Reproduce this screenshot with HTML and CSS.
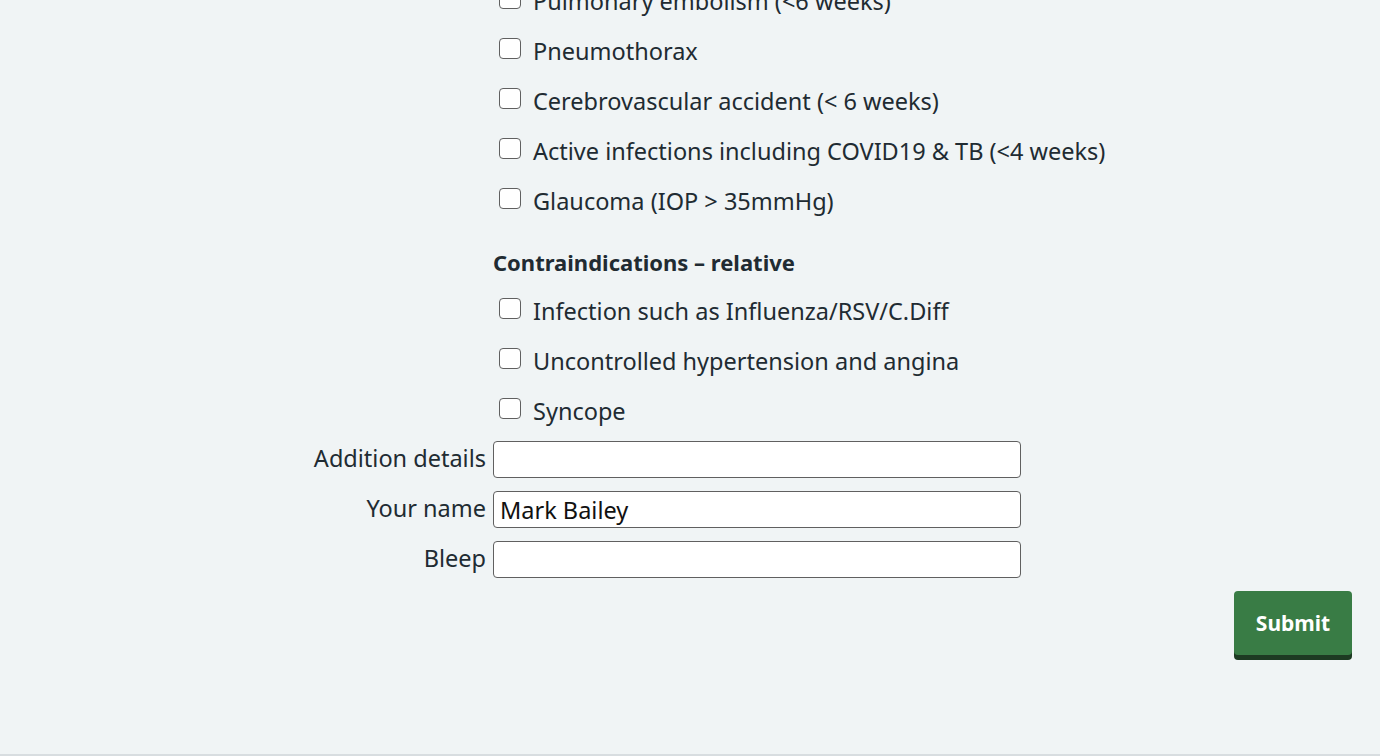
FILE: index.html
```html
<!DOCTYPE html>
<html lang="en">
<head>
<meta charset="utf-8">
<title>Referral form</title>
<link rel="stylesheet" href="styles.css">
</head>
<body>
<main class="page">
  <form class="form">
    <div class="label-col"></div>
    <div class="field-col">
      <ul class="checks">
        <li class="check"><span class="box"></span><span>Pulmonary embolism (&lt;6 weeks)</span></li>
        <li class="check"><span class="box"></span><span>Pneumothorax</span></li>
        <li class="check"><span class="box"></span><span>Cerebrovascular accident (&lt; 6 weeks)</span></li>
        <li class="check"><span class="box"></span><span>Active infections including COVID19 &amp; TB (&lt;4 weeks)</span></li>
        <li class="check"><span class="box"></span><span>Glaucoma (IOP &gt; 35mmHg)</span></li>
      </ul>
      <h3 class="group-title">Contraindications – relative</h3>
      <ul class="checks">
        <li class="check"><span class="box"></span><span>Infection such as Influenza/RSV/C.Diff</span></li>
        <li class="check"><span class="box"></span><span>Uncontrolled hypertension and angina</span></li>
        <li class="check"><span class="box"></span><span>Syncope</span></li>
      </ul>
    </div>

    <label class="label-col field-label">Addition details</label>
    <div class="field-col field-row"><div class="input"></div></div>

    <label class="label-col field-label">Your name</label>
    <div class="field-col field-row"><div class="input">Mark Bailey</div></div>

    <label class="label-col field-label">Bleep</label>
    <div class="field-col field-row"><div class="input"></div></div>
  </form>
  <div class="actions">
    <button class="submit" type="button">Submit</button>
  </div>
</main>
<footer class="footer"></footer>
</body>
</html>
```
FILE: styles.css
```css
html, body {
  margin: 0;
  padding: 0;
  background: #f0f4f5;
}
body {
  font-family: "Noto Sans", "Open Sans", sans-serif;
  color: #212b32;
  font-size: 23.5px;
  overflow: hidden;
  height: 756px;
  display: flex;
  flex-direction: column;
}
.page {
  margin-top: -24px;
  padding: 0 28px 0 0;
  flex: 1;
}
.form {
  display: grid;
  grid-template-columns: 486px 528px;
  column-gap: 7px;
}
.checks {
  list-style: none;
  margin: 0;
  padding: 0;
}
.check {
  height: 50px;
  display: flex;
  align-items: center;
  gap: 12px;
  padding-left: 6px;
  white-space: nowrap;
  line-height: 30px;
}
.box {
  width: 20px;
  height: 19px;
  border: 1.5px solid #606060;
  border-radius: 4px;
  background: #fff;
  flex: none;
  margin-top: -5px;
}
.group-title {
  margin: 0;
  font-size: 22px;
  font-weight: 700;
  line-height: 30px;
  padding: 21px 0 9px;
}
.field-label {
  text-align: right;
  height: 37px;
  line-height: 34px;
  margin-top: 5px;
  margin-bottom: 8px;
  white-space: nowrap;
}
.field-row {
  margin-top: 5px;
  margin-bottom: 8px;
}
.input {
  box-sizing: border-box;
  height: 37px;
  border: 1.5px solid #606060;
  border-radius: 4px;
  background: #fff;
  padding: 0 6px;
  line-height: 36px;
  font-size: 23.5px;
  color: #111;
}
.actions {
  display: flex;
  justify-content: flex-end;
  margin-top: 5px;
}
.submit {
  width: 118px;
  height: 64px;
  background: #397c45;
  color: #fff;
  border: none;
  border-radius: 4px;
  box-shadow: 0 5px 0 #1d3a22;
  font-family: "Noto Sans", "Open Sans", sans-serif;
  font-weight: 700;
  font-size: 21px;
  cursor: pointer;
}
.footer {
  height: 0;
  border-top: 2px solid #d8dde0;
}
```
